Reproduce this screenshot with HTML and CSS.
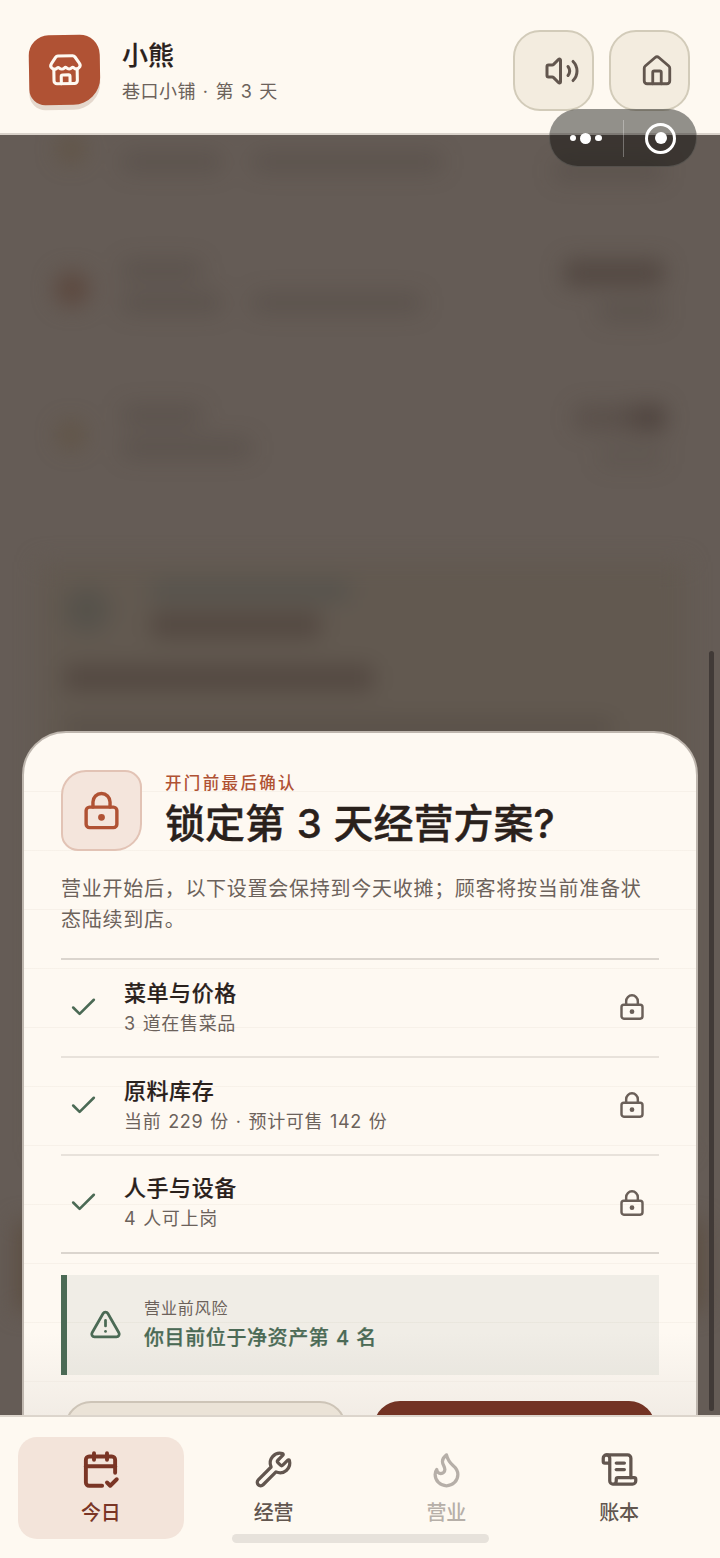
FILE: index.html
```html
<!DOCTYPE html>
<html lang="zh-CN">
<head>
<meta charset="utf-8">
<title>巷口小铺</title>
<link rel="stylesheet" href="styles.css">
</head>
<body>
<svg class="sprite" aria-hidden="true">
  <symbol id="store" viewBox="0 0 24 24"><path d="M15 21v-5a1 1 0 0 0-1-1h-4a1 1 0 0 0-1 1v5"/><path d="M17.774 10.31a1.12 1.12 0 0 0-1.549 0 2.5 2.5 0 0 1-3.451 0 1.12 1.12 0 0 0-1.548 0 2.5 2.5 0 0 1-3.452 0 1.12 1.12 0 0 0-1.549 0 2.5 2.5 0 0 1-3.77-3.248l2.889-4.184A2 2 0 0 1 7 2h10a2 2 0 0 1 1.653.873l2.895 4.192a2.5 2.5 0 0 1-3.774 3.244"/><path d="M4 10.95V19a2 2 0 0 0 2 2h12a2 2 0 0 0 2-2v-8.05"/></symbol>
  <symbol id="volume" viewBox="0 0 24 24"><path d="M11 4.702a.705.705 0 0 0-1.203-.498L6.413 7.587A1.4 1.4 0 0 1 5.416 8H3a1 1 0 0 0-1 1v6a1 1 0 0 0 1 1h2.416a1.4 1.4 0 0 1 .997.413l3.383 3.384A.705.705 0 0 0 11 19.298z"/><path d="M16 9a5 5 0 0 1 0 6"/><path d="M19.364 18.364a9 9 0 0 0 0-12.728"/></symbol>
  <symbol id="house" viewBox="0 0 24 24"><path d="M15 21v-8a1 1 0 0 0-1-1h-4a1 1 0 0 0-1 1v8"/><path d="M3 10a2 2 0 0 1 .709-1.528l7-6a2 2 0 0 1 2.582 0l7 6A2 2 0 0 1 21 10v9a2 2 0 0 1-2 2H5a2 2 0 0 1-2-2z"/></symbol>
  <symbol id="lock" viewBox="0 0 24 24"><circle cx="12" cy="16" r="1"/><rect x="3" y="10" width="18" height="12" rx="2"/><path d="M7 10V7a5 5 0 0 1 10 0v3"/></symbol>
  <symbol id="check" viewBox="0 0 24 24"><path d="M20 6 9 17l-5-5"/></symbol>
  <symbol id="alert" viewBox="0 0 24 24"><path d="m21.73 18-8-14a2 2 0 0 0-3.48 0l-8 14A2 2 0 0 0 4 21h16a2 2 0 0 0 1.73-3"/><path d="M12 9v4"/><path d="M12 17h.01"/></symbol>
  <symbol id="calendar" viewBox="0 0 24 24"><path d="M8 2v4"/><path d="M16 2v4"/><path d="M21 14V6a2 2 0 0 0-2-2H5a2 2 0 0 0-2 2v14a2 2 0 0 0 2 2h8"/><path d="M3 10h18"/><path d="m16 20 2 2 4-4"/></symbol>
  <symbol id="wrench" viewBox="0 0 24 24"><path d="M14.7 6.3a1 1 0 0 0 0 1.4l1.6 1.6a1 1 0 0 0 1.4 0l3.106-3.105c.32-.322.863-.22.983.218a6 6 0 0 1-8.259 7.057l-7.91 7.91a1 1 0 0 1-2.999-3l7.91-7.91a6 6 0 0 1 7.057-8.259c.438.12.54.662.219.984z"/></symbol>
  <symbol id="flame" viewBox="0 0 24 24"><path d="M12 3q1 4 4 6.5t3 5.5a1 1 0 0 1-14 0 5 5 0 0 1 1-3 1 1 0 0 0 5 0c0-2-1.5-3-1.5-5q0-2 2.5-4"/></symbol>
  <symbol id="scroll" viewBox="0 0 24 24"><path d="M15 12h-5"/><path d="M15 8h-5"/><path d="M19 17V5a2 2 0 0 0-2-2H4"/><path d="M8 21h12a2 2 0 0 0 2-2v-1a1 1 0 0 0-1-1H11a1 1 0 0 0-1 1v1a2 2 0 1 1-4 0V5a2 2 0 1 0-4 0v2a1 1 0 0 0 1 1h3"/></symbol>
</svg>

<div class="app">
  <header class="topbar">
    <div class="avatar"><svg class="icon avatar-icon"><use href="#store"/></svg></div>
    <div class="identity">
      <div class="name">小熊</div>
      <div class="place">巷口小铺 · 第 3 天</div>
    </div>
    <div class="tools">
      <button class="tool"><svg class="icon icon-volume"><use href="#volume"/></svg></button>
      <button class="tool"><svg class="icon icon-house"><use href="#house"/></svg></button>
    </div>
    <div class="capsule">
      <div class="dots"><i class="dot"></i><i class="dot dot-big"></i><i class="dot"></i></div>
      <div class="capsule-rule"></div>
      <div class="ring"><i class="ring-core"></i></div>
    </div>
  </header>

  <main class="stage">
    <div class="haze">
      <div class="haze-row">
        <i class="spot"></i>
        <div class="haze-copy"><i class="smear w80 off"></i><span class="smear-line"><i class="smear w100"></i><i class="smear w190"></i></span></div>
        <div class="haze-sum"><i class="smear w100 strong off"></i><i class="smear w110"></i></div>
      </div>
      <div class="haze-row">
        <i class="spot spot-red"></i>
        <div class="haze-copy"><i class="smear w80"></i><span class="smear-line"><i class="smear w100"></i><i class="smear w170"></i></span></div>
        <div class="haze-sum"><i class="smear w100 strong"></i><i class="smear w65"></i></div>
      </div>
      <div class="haze-row">
        <i class="spot"></i>
        <div class="haze-copy"><i class="smear w80"></i><i class="smear w130"></i></div>
        <div class="haze-sum"><i class="smear w90 strong fade-in"></i><i class="smear w65 faint"></i></div>
      </div>
      <div class="haze-card">
        <div class="haze-head">
          <i class="blot"></i>
          <div class="haze-titles"><i class="smear w200 green"></i><i class="smear w170 strong"></i></div>
        </div>
        <i class="smear w310 strong"></i>
        <i class="smear wfull"></i>
      </div>
      <div class="haze-glow"></div>
    </div>
    <div class="scrollbar"></div>

    <section class="sheet">
      <div class="sheet-head">
        <div class="seal"><svg class="icon icon-seal"><use href="#lock"/></svg></div>
        <div class="heading">
          <div class="eyebrow">开门前最后确认</div>
          <h1 class="title">锁定第 3 天经营方案?</h1>
        </div>
      </div>
      <p class="lead">营业开始后，以下设置会保持到今天收摊；顾客将按当前准备状态陆续到店。</p>
      <ul class="checks">
        <li class="check">
          <svg class="icon icon-check"><use href="#check"/></svg>
          <div class="check-copy"><div class="check-name">菜单与价格</div><div class="check-note">3 道在售菜品</div></div>
          <svg class="icon icon-lock"><use href="#lock"/></svg>
        </li>
        <li class="check">
          <svg class="icon icon-check"><use href="#check"/></svg>
          <div class="check-copy"><div class="check-name">原料库存</div><div class="check-note">当前 229 份 · 预计可售 142 份</div></div>
          <svg class="icon icon-lock"><use href="#lock"/></svg>
        </li>
        <li class="check">
          <svg class="icon icon-check"><use href="#check"/></svg>
          <div class="check-copy"><div class="check-name">人手与设备</div><div class="check-note">4 人可上岗</div></div>
          <svg class="icon icon-lock"><use href="#lock"/></svg>
        </li>
      </ul>
      <div class="risk">
        <svg class="icon icon-alert"><use href="#alert"/></svg>
        <div class="risk-copy"><div class="risk-label">营业前风险</div><div class="risk-text">你目前位于净资产第 4 名</div></div>
      </div>
      <div class="actions">
        <button class="action"></button>
        <button class="action action-primary"></button>
      </div>
    </section>
  </main>

  <nav class="tabs">
    <a class="tab tab-active"><svg class="icon"><use href="#calendar"/></svg><span>今日</span></a>
    <a class="tab"><svg class="icon"><use href="#wrench"/></svg><span>经营</span></a>
    <a class="tab tab-off"><svg class="icon"><use href="#flame"/></svg><span>营业</span></a>
    <a class="tab"><svg class="icon"><use href="#scroll"/></svg><span>账本</span></a>
    <div class="home-bar"></div>
  </nav>
</div>
</body>
</html>
```
FILE: styles.css
```css
* { box-sizing: border-box; }
body {
  margin: 0;
  font-family: Inter, "Noto Sans CJK SC", sans-serif;
  color: #2a211c;
}
button { font: inherit; padding: 0; }
.sprite { display: none; }
.icon {
  display: block;
  flex: none;
  fill: none;
  stroke: currentColor;
  stroke-width: 2;
  stroke-linecap: round;
  stroke-linejoin: round;
}
.app {
  width: 720px;
  height: 1558px;
  display: flex;
  flex-direction: column;
  overflow: hidden;
  background: #fef9f1;
}

/* top bar */
.topbar {
  position: relative;
  z-index: 3;
  flex: none;
  height: 135px;
  display: flex;
  align-items: flex-start;
  padding: 30px 30px 0 29px;
  background: #fef9f1;
  border-bottom: 2px solid #d9d2ca;
}
.avatar {
  width: 71px;
  height: 70px;
  margin-top: 5px;
  display: grid;
  place-items: center;
  border-radius: 20px 20px 27px 16px;
  background: #b05234;
  color: #fef9f1;
  box-shadow: 0 5px 0 #e5d8cd;
  transform: rotate(-1deg);
}
.avatar-icon { width: 35px; height: 35px; stroke-width: 2.1; margin-left: 1px; }
.identity { margin: 8px 0 0 22px; flex: 1; }
.name { font-size: 26px; line-height: 36px; font-weight: 500; -webkit-text-stroke: .2px; }
.place { font-size: 18px; line-height: 26px; margin-top: 5px; letter-spacing: .5px; word-spacing: 1.3px; color: #6c625b; }
.tools { display: flex; gap: 15px; }
.tool {
  width: 81px;
  height: 81px;
  display: grid;
  place-items: center;
  border: 2px solid #d2cbb9;
  border-radius: 27px;
  background: #f3ecdf;
  color: #62564e;
}
.icon-volume { width: 36px; height: 36px; margin-left: 17px; }
.icon-house { width: 34px; height: 34px; margin-left: 15px; }
.capsule {
  position: absolute;
  left: 549px;
  top: 109px;
  width: 148px;
  height: 58px;
  display: flex;
  align-items: center;
  border: 1px solid rgba(150, 150, 145, .3);
  border-radius: 29px;
  background: rgba(4, 5, 3, .43);
}
.dots { width: 73px; display: flex; align-items: center; justify-content: center; gap: 4px; padding-right: 2px; }
.dot { width: 6.5px; height: 6.5px; border-radius: 50%; background: #fff; }
.dot-big { width: 11px; height: 11px; }
.capsule-rule { width: 1px; height: 37px; background: rgba(255, 255, 255, .3); }
.ring {
  width: 31px;
  height: 31px;
  margin-left: 21px;
  display: grid;
  place-items: center;
  border: 3px solid #fff;
  border-radius: 50%;
}
.ring-core { width: 12px; height: 12px; border-radius: 50%; background: #fff; }

/* dimmed page behind the sheet */
.stage { position: relative; flex: 1; overflow: hidden; background: #655c56; }
.haze { height: 100%; display: flex; flex-direction: column; padding: 0 0 0 30px; filter: blur(11px); }
.haze-row { flex: none; height: 145px; display: flex; align-items: flex-start; padding: 0 56px 0 27px; }
.haze-row:first-child { height: 141px; margin-top: -16px; }
.spot { flex: none; width: 28px; height: 28px; margin-top: 16px; border-radius: 50%; background: rgba(94, 76, 50, .45); }
.spot-red { width: 34px; height: 34px; background: #5c483e; margin: 12px -4px 0 -2px; }
.haze-copy { flex: 1; display: flex; flex-direction: column; gap: 13px; margin-left: 37px; }
.haze-sum { display: flex; flex-direction: column; align-items: flex-end; gap: 16px; }
.smear-line { display: flex; gap: 30px; }
.smear { display: block; height: 20px; background: rgba(60, 50, 44, .22); border-radius: 6px; }
.strong { height: 26px; background: rgba(60, 47, 42, .46); }
.fade-in { background: linear-gradient(90deg, rgba(60, 47, 42, .25) 50%, rgba(60, 47, 42, .7)); }
.faint { opacity: .6; }
.off { visibility: hidden; }
.green { background: rgba(70, 75, 72, .4); }
.w65 { width: 65px; } .w80 { width: 80px; } .w90 { width: 90px; } .w100 { width: 100px; } .w110 { width: 110px; }
.w130 { width: 130px; } .w170 { width: 170px; } .w190 { width: 190px; } .w200 { width: 200px; }
.w310 { width: 310px; } .wfull { width: 550px; }
.haze-card {
  height: 590px;
  margin: 12px 34px 0 9px;
  flex: none;
  display: flex;
  flex-direction: column;
  gap: 27px;
  padding: 19px 25px;
  background: #625950;
}
.haze-card .strong { background: rgba(66, 54, 50, .48); }
.haze-head { display: flex; gap: 41px; }
.blot { width: 46px; height: 46px; margin-top: 6px; border-radius: 23px; background: rgba(70, 75, 70, .42); }
.haze-titles { display: flex; flex-direction: column; gap: 11px; }
.haze-glow { flex: none; height: 90px; margin: 69px 15px 0 -15px; background: #5d4f43; }
.scrollbar {
  position: absolute;
  right: 6px;
  top: 516px;
  width: 5px;
  height: 760px;
  border-radius: 3px;
  background: #413a37;
}

/* confirmation sheet */
.sheet {
  position: absolute;
  left: 22px;
  right: 22px;
  top: 596px;
  height: 800px;
  padding: 37px 37px 0;
  border: 2px solid #beb6ae;
  border-radius: 44px 44px 0 0;
  background:
    linear-gradient(rgba(232, 226, 219, 0) 600px, rgba(232, 226, 219, .6) 690px),
    repeating-linear-gradient(transparent 0 58px, rgba(170, 150, 130, .08) 58px 59px),
    #fef9f2;
}
.sheet-head { display: flex; gap: 23px; }
.seal {
  width: 81px;
  height: 81px;
  display: grid;
  place-items: center;
  border: 2px solid #e2c3b5;
  border-radius: 25px 17px 27px 17px;
  background: #f4e5dc;
  color: #b05234;
}
.icon-seal { width: 41px; height: 41px; stroke-width: 2; }
.eyebrow { margin-top: 2px; font-size: 16.5px; line-height: 22px; font-weight: 500; letter-spacing: 2.35px; color: #b05234; }
.title { margin: 4px 0 0; font-size: 40px; line-height: 52px; font-weight: 500; letter-spacing: 0; word-spacing: 1px; white-space: nowrap; -webkit-text-stroke: .4px; }
.lead { margin: 23px 0 0; font-size: 20px; line-height: 31px; letter-spacing: .73px; color: #6c625b; }
.checks { list-style: none; margin: 22px 0 0; padding: 0; border-top: 2px solid #dbd5ce; border-bottom: 2px solid #dbd5ce; }
.check { height: 98px; display: flex; align-items: center; padding: 0 13px 2px 7px; }
.check:first-child { height: 96px; }
.check:last-child { height: 97.5px; }
.check + .check { border-top: 2px solid #e8e2db; }
.icon-check { width: 31px; height: 31px; color: #4b6a55; }
.check-copy { flex: 1; margin-left: 25px; }
.check-name { font-size: 22px; line-height: 32px; font-weight: 500; letter-spacing: .55px; -webkit-text-stroke: .2px; }
.check-note { font-size: 18px; line-height: 28px; letter-spacing: .65px; word-spacing: 1.2px; color: #6c625b; margin-top: 1px; }
.icon-lock { width: 28px; height: 28px; color: #6b6059; stroke-width: 2.1; }
.risk {
  height: 100px;
  margin-top: 21.5px;
  display: flex;
  align-items: center;
  padding: 0 0 1px 22px;
  border-left: 6px solid #4b6a55;
  background: rgba(75, 106, 85, .08);
  color: #4b6a55;
}
.icon-alert { width: 33px; height: 33px; }
.risk-copy { margin-left: 22px; }
.risk-label { font-size: 16px; line-height: 26px; letter-spacing: .9px; color: #6c625b; }
.risk-text { font-size: 20px; line-height: 32px; margin-top: 1px; font-weight: 500; letter-spacing: .6px; word-spacing: .6px; -webkit-text-stroke: .25px; }
.actions { display: grid; grid-template-columns: 1fr 1fr; gap: 28px; margin: 25.5px 4px 0; }
.action { height: 88px; border: 2px solid #cdc4b7; border-radius: 26px; background: #ebe3d7; }
.action-primary { border-color: #733324; background: #733324; }

/* bottom tabs */
.tabs {
  position: relative;
  flex: none;
  height: 143px;
  display: grid;
  grid-template-columns: repeat(4, 1fr);
  gap: 7px;
  align-items: start;
  padding: 20px 18px 0;
  border-top: 2px solid #dcd5cc;
  background: #fef9f1;
}
.tab {
  height: 102px;
  display: flex;
  flex-direction: column;
  align-items: center;
  padding-top: 13px;
  gap: 9px;
  border-radius: 19px;
  color: #62564f;
  font-size: 20px;
  line-height: 30px;
  font-weight: 500;
}
.tab .icon { width: 39px; height: 39px; }
.tab-active { background: #f3e4da; color: #7a3525; }
.tab-active .icon { stroke-width: 2.4; }
.tab-off { color: #b6afa8; }
.home-bar {
  position: absolute;
  left: 232px;
  bottom: 15px;
  width: 257px;
  height: 9px;
  border-radius: 5px;
  background: #e7e2db;
}
```
